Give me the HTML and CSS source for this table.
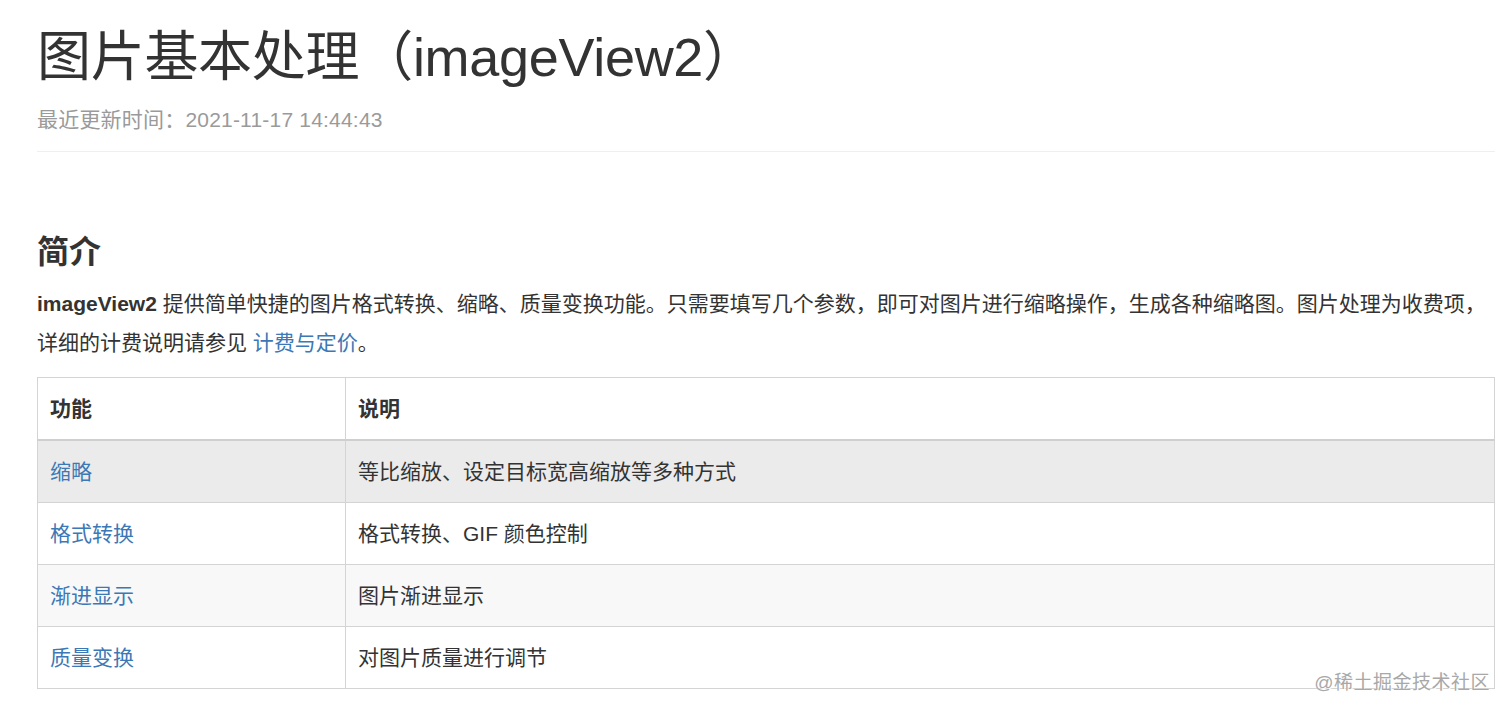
FILE: index.html
```html
<!DOCTYPE html>
<html lang="zh-CN">
<head>
<meta charset="utf-8">
<title>图片基本处理（imageView2）</title>
<link rel="stylesheet" href="styles.css">
</head>
<body>
<div class="page">
  <header class="doc-head">
    <h1 class="doc-title">图片基本处理（imageView2）</h1>
    <div class="doc-meta">最近更新时间：2021-11-17 14:44:43</div>
  </header>
  <section class="doc-section">
    <h2 class="section-title">简介</h2>
    <p class="intro"><strong>imageView2</strong> 提供简单快捷的图片格式转换、缩略、质量变换功能。只需要填写几个参数，即可对图片进行缩略操作，生成各种缩略图。图片处理为收费项，详细的计费说明请参见 <a class="link" href="#">计费与定价</a>。</p>
    <table class="feature-table">
      <thead>
        <tr><th class="col-name">功能</th><th>说明</th></tr>
      </thead>
      <tbody>
        <tr class="row-hover"><td><a class="link" href="#">缩略</a></td><td>等比缩放、设定目标宽高缩放等多种方式</td></tr>
        <tr><td><a class="link" href="#">格式转换</a></td><td>格式转换、GIF 颜色控制</td></tr>
        <tr class="row-alt"><td><a class="link" href="#">渐进显示</a></td><td>图片渐进显示</td></tr>
        <tr><td><a class="link" href="#">质量变换</a></td><td>对图片质量进行调节</td></tr>
      </tbody>
    </table>
  </section>
  <div class="watermark">@稀土掘金技术社区</div>
</div>
</body>
</html>
```

FILE: styles.css
```css
html, body {
  margin: 0;
  padding: 0;
  background: #ffffff;
}

body {
  font-family: "Liberation Sans", "Noto Sans CJK SC", sans-serif;
  color: #333333;
}

.page {
  position: relative;
  padding: 0 17px 0 37px;
  min-height: 713px;
  box-sizing: border-box;
}

.doc-head {
  padding-top: 22px;
  padding-bottom: 16px;
  border-bottom: 1px solid #efefef;
}

.doc-title {
  margin: 0;
  font-size: 54px;
  line-height: 70px;
  font-weight: 400;
  color: #333333;
  letter-spacing: -0.3px;
}

.doc-meta {
  margin-top: 13px;
  font-size: 21px;
  line-height: 30px;
  color: #9a9a9a;
  letter-spacing: 0.2px;
}

.doc-section {
  padding-top: 78px;
}

.section-title {
  margin: 0;
  font-size: 32px;
  line-height: 44px;
  font-weight: 700;
  color: #333333;
}

.intro {
  margin: 10px 0 0;
  font-size: 21px;
  line-height: 39px;
  color: #333333;
}

.intro strong {
  font-weight: 700;
}

.link {
  color: #3c78b5;
  text-decoration: none;
}

.feature-table {
  width: 100%;
  margin-top: 15px;
  border-collapse: collapse;
  font-size: 21px;
  line-height: 39px;
  color: #333333;
}

.feature-table th,
.feature-table td {
  border: 1px solid #d4d4d4;
  padding: 11px 12px;
  text-align: left;
  vertical-align: middle;
}

.feature-table th {
  font-weight: 700;
  padding-top: 11px;
  padding-bottom: 11px;
  border-bottom: 2px solid #cfcfcf;
  background: #ffffff;
}

.feature-table .col-name {
  width: 283px;
}

.feature-table .row-hover td {
  background: #ebebeb;
}

.feature-table .row-alt td {
  background: #f8f8f8;
}

.watermark {
  position: absolute;
  right: 22px;
  top: 670px;
  font-size: 19px;
  line-height: 26px;
  color: #a8a8a8;
  text-shadow: 0 0 1px #ffffff, 1px 1px 0 #ffffff;
  letter-spacing: 0.5px;
}
```
